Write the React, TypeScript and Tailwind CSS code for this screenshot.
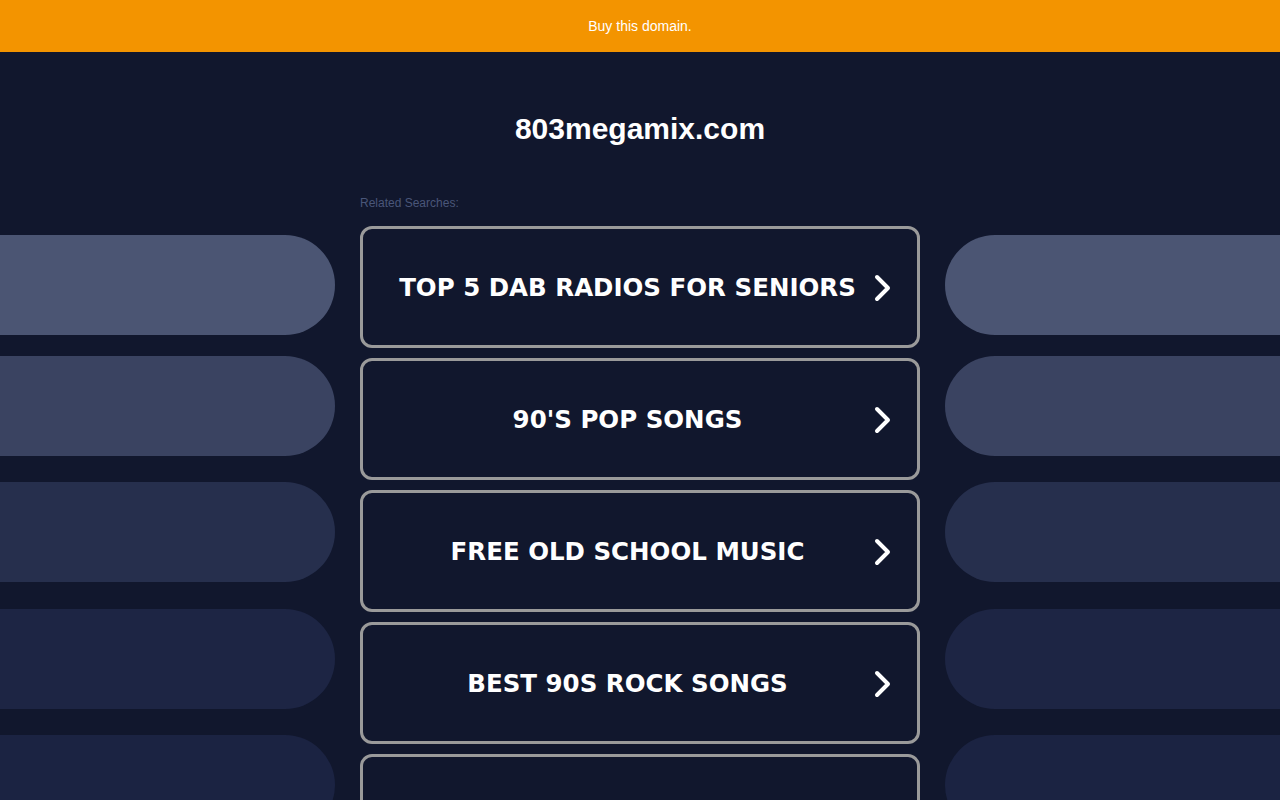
import React from "react";

const searches = [
  "TOP 5 DAB RADIOS FOR SENIORS",
  "90'S POP SONGS",
  "FREE OLD SCHOOL MUSIC",
  "BEST 90S ROCK SONGS",
  "",
];

function Chevron() {
  return (
    <svg width="22" height="28" viewBox="0 0 22 28" className="absolute right-[23px] top-[calc(50%+1px)] -translate-y-1/2">
      <path d="M5 3 L16 14 L5 25" fill="none" stroke="#ffffff" strokeWidth="4" strokeLinecap="round" strokeLinejoin="round" />
    </svg>
  );
}

function LeftPills() {
  return (
    <div className="flex flex-col w-[335px] pt-[39px]">
      <div className="h-[100px] bg-[#4b5573] rounded-r-[50px]" />
      <div className="h-[100px] mt-[21px] bg-[#3a4361] rounded-r-[50px]" />
      <div className="h-[100px] mt-[26px] bg-[#262f4d] rounded-r-[50px]" />
      <div className="h-[100px] mt-[27px] bg-[#1d2544] rounded-r-[50px]" />
      <div className="h-[100px] mt-[26px] bg-[#1b2342] rounded-r-[50px]" />
    </div>
  );
}

function RightPills() {
  return (
    <div className="flex flex-col w-[335px] pt-[39px]">
      <div className="h-[100px] bg-[#4b5573] rounded-l-[50px]" />
      <div className="h-[100px] mt-[21px] bg-[#3a4361] rounded-l-[50px]" />
      <div className="h-[100px] mt-[26px] bg-[#262f4d] rounded-l-[50px]" />
      <div className="h-[100px] mt-[27px] bg-[#1d2544] rounded-l-[50px]" />
      <div className="h-[100px] mt-[26px] bg-[#1b2342] rounded-l-[50px]" />
    </div>
  );
}

export default function App() {
  return (
    <div className="w-[1280px] h-[800px] overflow-hidden bg-[#11172d] font-['Liberation_Sans',Arial,sans-serif]">
      <div className="h-[52px] bg-[#f39400] flex items-center justify-center text-white text-[14px]">
        Buy this domain.
      </div>
      <div className="h-[144px] flex items-start justify-center pt-[59px]">
        <h1 className="text-white font-bold text-[30px] leading-[36px]">803megamix.com</h1>
      </div>
      <div className="flex justify-between">
        <LeftPills />
        <div className="w-[560px] flex flex-col">
          <div className="text-[12px] leading-[14px] text-[#4a5679] h-[30px]">Related Searches:</div>
          <div className="flex flex-col gap-[10px]">
            {searches.map((s, i) => (
              <div
                key={i}
                className="relative h-[122px] shrink-0 border-[3px] border-[#9a9a9a] rounded-[12px] flex items-center pr-[25px] pt-[2px]"
              >
                <span className="flex-1 text-center text-white font-bold text-[24.5px] font-['DejaVu_Sans',Verdana,sans-serif]">
                  {s}
                </span>
                {s && <Chevron />}
              </div>
            ))}
          </div>
        </div>
        <RightPills />
      </div>
    </div>
  );
}
